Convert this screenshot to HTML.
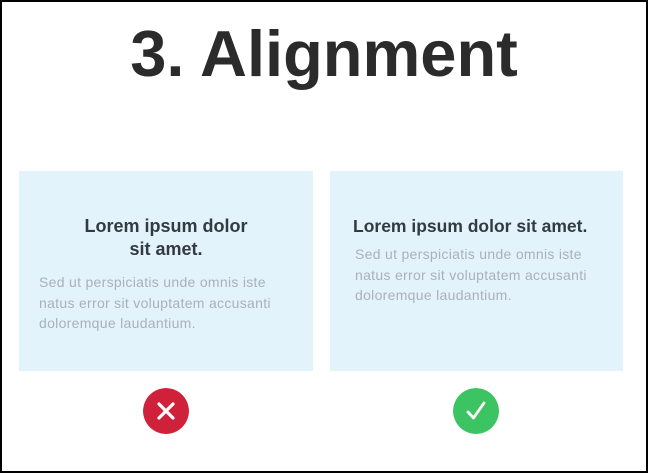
<!DOCTYPE html>
<html><head><style>
html,body{margin:0;padding:0}
body{width:648px;height:473px;position:relative;background:#fff;font-family:"Liberation Sans",sans-serif;overflow:hidden}
.frame{position:absolute;left:0;top:0;width:644px;height:469px;border:2px solid #000}
h1{position:absolute;left:0;width:648px;top:14px;margin:0;text-align:center;font-size:65px;font-weight:bold;color:#2b2b2b;line-height:80px}
.card{position:absolute;top:171px;height:200px;background:#e3f3fc}
.h{position:absolute;font-size:18px;font-weight:bold;color:#333a42;line-height:23px}
.p{position:absolute;font-size:14px;letter-spacing:0.3px;color:#aab0ba;line-height:20.5px;white-space:nowrap}
.ic{position:absolute;width:46px;height:46px;border-radius:50%;top:388px}
</style></head><body>
<div class="frame"></div>
<h1>3. Alignment</h1>
<div class="card" style="left:19px;width:294px"></div>
<div class="card" style="left:330px;width:293px"></div>
<div class="h" style="left:19px;width:294px;top:215px;text-align:center">Lorem ipsum dolor<br>sit amet.</div>
<div class="p" style="left:39px;top:272px">Sed ut perspiciatis unde omnis iste<br>natus error sit voluptatem accusanti<br>doloremque laudantium.</div>
<div class="h" style="left:353px;top:215px;font-size:17.5px">Lorem ipsum dolor sit amet.</div>
<div class="p" style="left:355px;top:244px">Sed ut perspiciatis unde omnis iste<br>natus error sit voluptatem accusanti<br>doloremque laudantium.</div>
<svg class="ic" style="left:143px" viewBox="0 0 46 46"><circle cx="23" cy="23" r="23" fill="#d0213a"/><path d="M16 16L30 30M30 16L16 30" stroke="#fff" stroke-width="3.2" stroke-linecap="round"/></svg>
<svg class="ic" style="left:453px" viewBox="0 0 46 46"><circle cx="23" cy="23" r="23" fill="#3cc463"/><path d="M15 24L20.5 30L31 15" stroke="#fff" stroke-width="2.8" fill="none" stroke-linecap="round" stroke-linejoin="round"/></svg>
</body></html>
